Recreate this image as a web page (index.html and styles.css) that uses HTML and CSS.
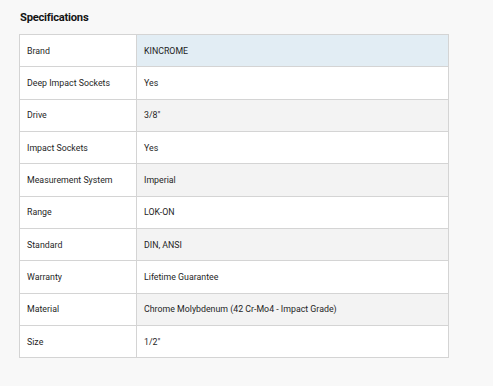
FILE: index.html
```html
<!DOCTYPE html>
<html>
<head>
<meta charset="utf-8">
<link rel="stylesheet" href="styles.css">
</head>
<body>
<section class="specs">
  <h2 class="specs-title">Specifications</h2>
  <table class="specs-table">
    <tbody>
      <tr class="row-active"><td class="label">Brand</td><td class="value">KINCROME</td></tr>
      <tr><td class="label">Deep Impact Sockets</td><td class="value">Yes</td></tr>
      <tr class="row-alt"><td class="label">Drive</td><td class="value">3/8"</td></tr>
      <tr><td class="label">Impact Sockets</td><td class="value">Yes</td></tr>
      <tr class="row-alt"><td class="label">Measurement System</td><td class="value">Imperial</td></tr>
      <tr><td class="label">Range</td><td class="value">LOK-ON</td></tr>
      <tr class="row-alt"><td class="label">Standard</td><td class="value">DIN, ANSI</td></tr>
      <tr><td class="label">Warranty</td><td class="value">Lifetime Guarantee</td></tr>
      <tr class="row-alt"><td class="label">Material</td><td class="value">Chrome Molybdenum (42 Cr-Mo4 - Impact Grade)</td></tr>
      <tr><td class="label">Size</td><td class="value">1/2"</td></tr>
    </tbody>
  </table>
</section>
</body>
</html>
```
FILE: styles.css
```css
html, body {
  margin: 0;
  padding: 0;
  background: #f8f8f8;
}
body {
  font-family: Roboto, "Liberation Sans", Arial, sans-serif;
  color: #1f1f1f;
}
.specs {
  padding: 11px 0 0 19px;
}
.specs-title {
  margin: 0 0 9px 1px;
  font-size: 11.2px;
  line-height: 14px;
  font-weight: 700;
  color: #141414;
  letter-spacing: -0.25px;
}
.specs-table {
  width: 430px;
  border-collapse: collapse;
  table-layout: fixed;
  background: #fff;
}
.specs-table td {
  border: 1px solid #d4d4d4;
  height: 32.33px;
  padding: 0 7px;
  font-size: 8.8px;
  line-height: 12px;
  vertical-align: middle;
  box-sizing: border-box;
}
.specs-table td.label {
  width: 117px;
}
.row-active .value {
  background: #e2edf4;
}
.row-alt .value {
  background: #f3f3f3;
}
```
